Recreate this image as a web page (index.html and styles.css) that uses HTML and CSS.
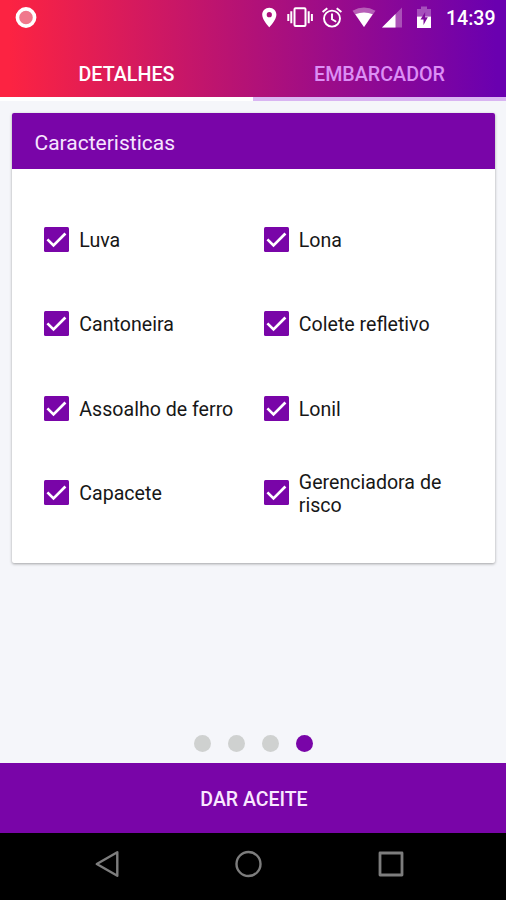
FILE: index.html
```html
<!DOCTYPE html>
<html lang="pt-BR">
<head>
<meta charset="utf-8">
<title>Detalhes</title>
<link rel="stylesheet" href="styles.css">
</head>
<body>
<svg class="defs" width="0" height="0">
  <symbol id="check" viewBox="0 0 25 25"><rect width="25" height="25" rx="1.5" fill="#7905a8"/><path d="M3.400 12.400 9.500 18.400 21.400 6.500" fill="none" stroke="#fff" stroke-width="2.700"/></symbol>
</svg>
<div class="screen">
  <header class="top">
    <div class="status">
      <svg class="record" width="22" height="22" viewBox="0 0 22 22"><circle cx="11" cy="10.500" r="8.600" fill="#f0788c" stroke="#fff" stroke-width="3.600"/></svg>
      <svg class="system" width="180" height="36" viewBox="257 0 180 36" fill="#fff">
        <path fill-rule="evenodd" d="M269.300 7.700c-4 0-7.100 3.100-7.100 7 0 5.200 7.100 12.600 7.100 12.600s7.100-7.400 7.100-12.600c0-3.900-3.100-7-7.100-7zm0 9.600a2.600 2.600 0 1 1 0-5.200 2.600 2.600 0 0 1 0 5.200z"/>
        <path fill="none" stroke="#fff" stroke-width="2" d="M295.500 8.300h9q1 0 1 1v15.800q0 1-1 1h-9q-1 0-1-1V9.300q0-1 1-1zM291.300 11.200v12M308.700 11.200v12M288.300 14v7M311.900 14v7"/>
        <g fill="none" stroke="#fff" stroke-width="1.900"><circle cx="332" cy="18.600" r="8"/><path d="M332 13.500v5.700l4.200 2.600M322.600 12.100l4.700-3.900M341.400 12.100l-4.700-3.900"/></g>
        <path opacity=".35" d="M352.500 10.800q11.500-6.500 23 0L364 27z"/><path d="M355.300 14.300q8.700-3.700 17.400 0L364 27z"/>
        <path opacity=".3" d="M402 7.500v20h-20z"/><path d="M395.500 14v13.500H382z"/>
        <path opacity=".3" d="M421 6.500h6V9h4v7.500h-14V9h4z"/><path d="M417 16.500h14V28h-14z"/><path fill="#800c9c" d="m425.200 12-4.700 7.500h3V25l4.300-7.700H425z"/>
      </svg>
      <span class="time">14:39</span>
    </div>
    <nav class="tabs"><span class="tab active">DETALHES</span><span class="tab">EMBARCADOR</span></nav>
  </header>
  <main class="content">
    <section class="card">
      <h1 class="card-title">Caracteristicas</h1>
      <div class="options">
        <div class="option"><svg class="box"><use href="#check"/></svg><span>Luva</span></div>
        <div class="option"><svg class="box"><use href="#check"/></svg><span>Lona</span></div>
        <div class="option"><svg class="box"><use href="#check"/></svg><span>Cantoneira</span></div>
        <div class="option"><svg class="box"><use href="#check"/></svg><span>Colete refletivo</span></div>
        <div class="option"><svg class="box"><use href="#check"/></svg><span>Assoalho de ferro</span></div>
        <div class="option"><svg class="box"><use href="#check"/></svg><span>Lonil</span></div>
        <div class="option"><svg class="box"><use href="#check"/></svg><span>Capacete</span></div>
        <div class="option"><svg class="box"><use href="#check"/></svg><span>Gerenciadora de risco</span></div>
      </div>
    </section>
    <div class="dots"><i></i><i></i><i></i><i class="current"></i></div>
  </main>
  <button class="accept">DAR ACEITE</button>
  <footer class="navbar">
    <svg width="506" height="67" viewBox="0 833 506 67" fill="none" stroke="#7d7d7d" stroke-width="2.400" stroke-linejoin="round"><path d="M96.800 864l20.500-11.800v23.600z"/><circle cx="248.500" cy="864" r="12"/><rect x="380" y="853" width="22" height="22" stroke-width="2.800"/></svg>
  </footer>
</div>
</body>
</html>
```
FILE: styles.css
```css
* { box-sizing: border-box; }
body { margin: 0; font-family: Roboto, sans-serif; }
.defs { display: none; }
.screen { width: 506px; height: 900px; display: flex; flex-direction: column; background: #f5f6fa; overflow: hidden; }
.top { height: 101px; background: linear-gradient(89deg, #fc2342 2%, #b51275 48%, #6a00b0 98%) 0 0 / 100% 97px no-repeat; }
.status { height: 36px; display: flex; align-items: center; color: #fff; }
.record { margin-left: 15px; }
.system { margin-left: 220px; }
.time { margin-left: 9px; font-size: 19.5px; font-weight: 500; }
.tabs { display: grid; grid-template-columns: 1fr 1fr; height: 65px; }
.tab { display: flex; align-items: center; justify-content: center; padding-top: 16px; height: 65px; border-bottom: 4px solid #d9b5f2; font-size: 19.7px; font-weight: 500; color: #dc8ff5; }
.tab.active { color: #fff; border-color: #fff; }
.content { flex: 1; display: flex; flex-direction: column; justify-content: space-between; padding: 12px 11px 11px 12px; }
.card { height: 450px; background: #fff; border-radius: 2px; box-shadow: 0 1px 3px rgba(0, 0, 0, 0.35); overflow: hidden; }
.card-title { margin: 0; height: 56px; padding: 3px 0 0 22.5px; display: flex; align-items: center; background: #7905a8; color: #f7e5ff; font-size: 21px; font-weight: 400; }
.options { display: grid; grid-template-columns: 219.5px 219px; grid-auto-rows: 84.4px; padding: 28.4px 0 0 32.3px; }
.option { display: flex; align-items: center; gap: 10px; font-size: 19.6px; line-height: 23px; color: #171717; }
.option span { max-width: 160px; padding-top: 2px; }
.box { width: 25px; height: 25px; flex: none; }
.dots { display: flex; justify-content: center; gap: 16.8px; }
.dots i { width: 17px; height: 17px; border-radius: 50%; background: #cfd1d0; }
.dots .current { background: #7905a8; }
.accept { height: 70px; border: 0; padding: 2px 0 0 2px; background: #7905a8; color: #f9e8ff; font: 500 19.5px Roboto, sans-serif; }
.navbar { height: 67px; background: #000; }
.navbar svg { display: block; }
```
